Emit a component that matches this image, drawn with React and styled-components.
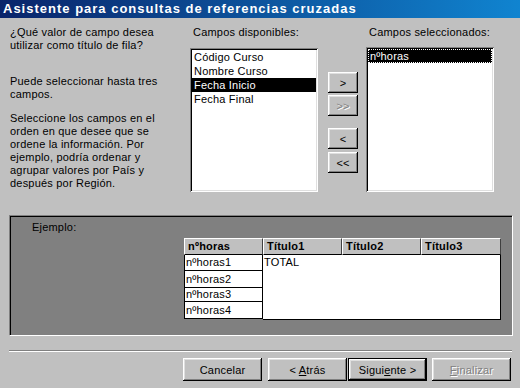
import React from 'react';
import styled, { createGlobalStyle, css } from 'styled-components';

const GlobalStyle = createGlobalStyle`
  html, body {
    margin: 0;
    padding: 0;
    background: #c0c0c0;
  }
`;

const Window = styled.div`
  width: 520px;
  height: 388px;
  overflow: hidden;
  background: #c0c0c0;
  color: #000;
  font-family: "Liberation Sans", Arial, sans-serif;
  font-size: 11px;
  letter-spacing: 0.2px;
  display: flex;
  flex-direction: column;
`;

const TitleBar = styled.div`
  height: 18px;
  padding-left: 3px;
  background: linear-gradient(to right, #0a246a, #1084d0);
  color: #fff;
  font-weight: bold;
  font-size: 13px;
  letter-spacing: 1px;
  line-height: 18px;
  white-space: nowrap;
`;

const Top = styled.div`
  display: flex;
  padding: 8px 0 0 10px;
`;

const Help = styled.div`
  width: 180px;
  line-height: 13px;
`;

const P = styled.p`
  margin: ${({ $gap }) => $gap}px 0 0 0;
  white-space: nowrap;
`;

const FieldCol = styled.div`
  display: flex;
  flex-direction: column;
  width: ${({ $w }) => $w}px;
`;

const Label = styled.div`
  line-height: 13px;
  padding-left: 3px;
  margin-bottom: ${({ $mb }) => $mb}px;
  white-space: nowrap;
`;

const ListBox = styled.div`
  box-sizing: border-box;
  height: ${({ $h }) => $h}px;
  background: #fff;
  padding: 2px;
  box-shadow: inset 1px 1px #808080, inset -1px -1px #fff,
    inset 2px 2px #000, inset -2px -2px #dfdfdf;
`;

const Item = styled.div`
  height: 14px;
  line-height: 14px;
  padding-left: 2px;
  white-space: nowrap;
  ${({ $sel }) => $sel && css`
    background: #000;
    color: #fff;
  `}
  ${({ $focus }) => $focus && css`
    outline: 1px dotted #fff;
    outline-offset: -1px;
  `}
`;

const MoveCol = styled.div`
  display: flex;
  flex-direction: column;
  width: 30px;
  margin: 46px 8px 0 10px;
`;

const Bevel = css`
  box-sizing: border-box;
  padding: 0;
  border: none;
  background: #c0c0c0;
  font-family: inherit;
  font-size: 11px;
  letter-spacing: inherit;
  color: #000;
  box-shadow: inset -1px -1px #000, inset 1px 1px #fff,
    inset -2px -2px #808080, inset 2px 2px #dfdfdf;
  ${({ disabled }) => disabled && css`
    color: #808080;
    text-shadow: 1px 1px #fff;
  `}
`;

const MoveButton = styled.button`
  ${Bevel}
  width: 30px;
  height: 21px;
  margin-top: ${({ $gap }) => $gap}px;
`;

const Panel = styled.div`
  box-sizing: border-box;
  margin: 23px 0 0 9px;
  width: 504px;
  height: 121px;
  background: #808080;
  border: 1px solid;
  border-color: #808080 #fff #fff #808080;
  box-shadow: inset 1px 1px #000;
  padding-top: 5px;
`;

const PanelLabel = styled.div`
  line-height: 13px;
  padding-left: 22px;
`;

const Grid = styled.div`
  display: flex;
  margin: 4px 0 0 174px;
`;

const KeyCol = styled.div`
  display: flex;
  flex-direction: column;
  width: 79px;
`;

const HeadRow = styled.div`
  display: flex;
`;

const Head = styled.div`
  box-sizing: border-box;
  width: ${({ $w }) => $w}px;
  height: 17px;
  line-height: 15px;
  padding-left: 3px;
  background: #c0c0c0;
  font-weight: bold;
  border-top: 1px solid #fff;
  border-left: 1px solid #fff;
  border-right: 1px solid #404040;
  border-bottom: 1px solid #000;
  white-space: nowrap;
`;

const KeyCell = styled.div`
  box-sizing: border-box;
  height: ${({ $h }) => $h}px;
  line-height: ${({ $h }) => $h - 1}px;
  padding-left: 1px;
  background: #fff;
  border-left: 1px solid #000;
  border-right: 1px solid #000;
  border-bottom: 1px solid #000;
`;

const DataCol = styled.div`
  display: flex;
  flex-direction: column;
  width: 238px;
`;

const DataArea = styled.div`
  box-sizing: border-box;
  height: 65px;
  background: #fff;
  border-right: 1px solid #000;
  border-bottom: 1px solid #000;
  padding-left: 1px;
  line-height: 15px;
`;

const Separator = styled.div`
  margin: 14px 8px 0 9px;
  border-top: 1px solid #808080;
  border-bottom: 1px solid #fff;
`;

const Footer = styled.div`
  display: flex;
  padding: 6px 0 0 183px;
`;

const WizardButton = styled.button`
  ${Bevel}
  width: 79px;
  height: 23px;
  margin-right: ${({ $mr }) => $mr}px;
  ${({ $default }) => $default && css`
    box-shadow: inset 0 0 0 1px #000, inset -2px -2px #000, inset 2px 2px #fff,
      inset -3px -3px #808080, inset 3px 3px #dfdfdf;
  `}
`;

const U = styled.span`
  text-decoration: underline;
`;

const available = ['Código Curso', 'Nombre Curso', 'Fecha Inicio', 'Fecha Final'];
const keyRows = [
  { name: 'nºhoras1', h: 16 },
  { name: 'nºhoras2', h: 17 },
  { name: 'nºhoras3', h: 14 },
  { name: 'nºhoras4', h: 17 },
];

export default function App() {
  return (
    <Window>
      <GlobalStyle />
      <TitleBar>Asistente para consultas de referencias cruzadas</TitleBar>
      <Top>
        <Help>
          <P $gap={0}>¿Qué valor de campo desea<br />utilizar como título de fila?</P>
          <P $gap={23}>Puede seleccionar hasta tres<br />campos.</P>
          <P $gap={11}>
            Seleccione los campos en el<br />
            orden en que desee que se<br />
            ordene la información. Por<br />
            ejemplo, podría ordenar y<br />
            agrupar valores por País y<br />
            después por Región.
          </P>
        </Help>
        <FieldCol $w={128}>
          <Label $mb={9}>Campos disponibles:</Label>
          <ListBox $h={144}>
            {available.map((f) => (
              <Item key={f} $sel={f === 'Fecha Inicio'}>{f}</Item>
            ))}
          </ListBox>
        </FieldCol>
        <MoveCol>
          <MoveButton $gap={0}>&gt;</MoveButton>
          <MoveButton $gap={2} disabled>&gt;&gt;</MoveButton>
          <MoveButton $gap={12}>&lt;</MoveButton>
          <MoveButton $gap={3}>&lt;&lt;</MoveButton>
        </MoveCol>
        <FieldCol $w={128}>
          <Label $mb={8}>Campos seleccionados:</Label>
          <ListBox $h={145}>
            <Item $sel $focus>nºhoras</Item>
          </ListBox>
        </FieldCol>
      </Top>
      <Panel>
        <PanelLabel>Ejemplo:</PanelLabel>
        <Grid>
          <KeyCol>
            <Head $w={79}>nºhoras</Head>
            {keyRows.map((r) => (
              <KeyCell key={r.name} $h={r.h}>{r.name}</KeyCell>
            ))}
          </KeyCol>
          <DataCol>
            <HeadRow>
              <Head $w={79}>Título1</Head>
              <Head $w={79}>Título2</Head>
              <Head $w={80}>Título3</Head>
            </HeadRow>
            <DataArea>TOTAL</DataArea>
          </DataCol>
        </Grid>
      </Panel>
      <Separator />
      <Footer>
        <WizardButton $mr={6}>Cancelar</WizardButton>
        <WizardButton $mr={1}>&lt; <U>A</U>trás</WizardButton>
        <WizardButton $mr={5} $default>Sigui<U>e</U>nte &gt;</WizardButton>
        <WizardButton $mr={0} disabled><U>F</U>inalizar</WizardButton>
      </Footer>
    </Window>
  );
}
